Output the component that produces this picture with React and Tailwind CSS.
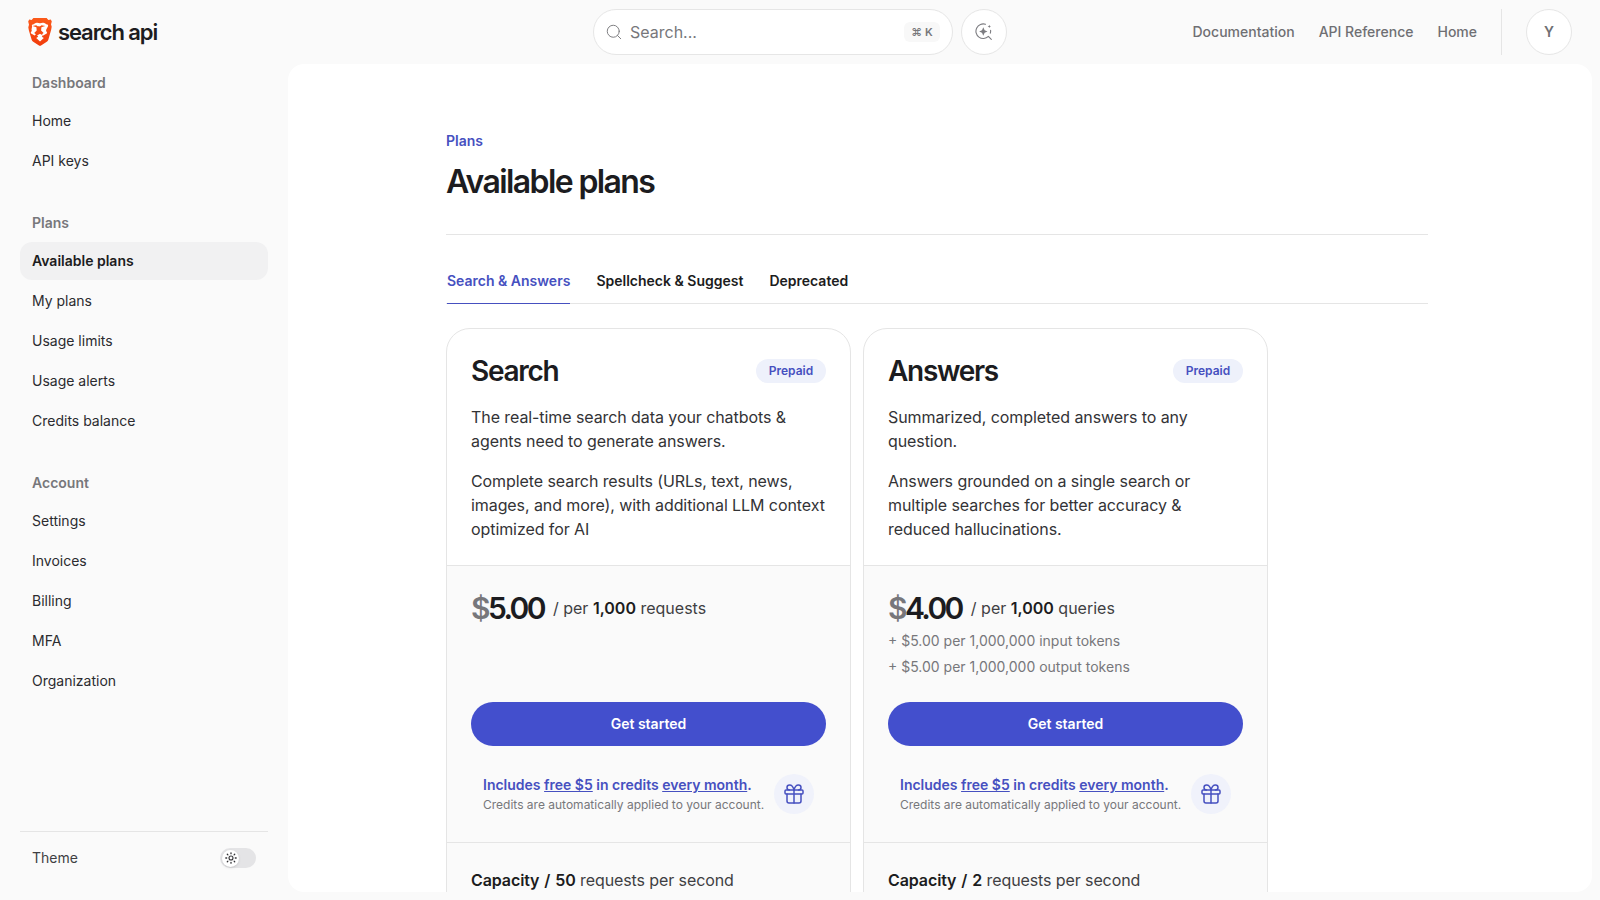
import { Search, Gift } from "lucide-react";

const NAV = [
  { title: "Dashboard", items: ["Home", "API keys"] },
  { title: "Plans", items: ["Available plans", "My plans", "Usage limits", "Usage alerts", "Credits balance"] },
  { title: "Account", items: ["Settings", "Invoices", "Billing", "MFA", "Organization"] },
];

const PLANS = [
  {
    name: "Search",
    lead: "The real-time search data your chatbots & agents need to generate answers.",
    body: "Complete search results (URLs, text, news, images, and more), with additional LLM context optimized for AI",
    price: "5.00",
    unit: "requests",
    extras: [],
    capacity: "50",
    capacityUnit: "requests",
  },
  {
    name: "Answers",
    lead: "Summarized, completed answers to any question.",
    body: "Answers grounded on a single search or multiple searches for better accuracy & reduced hallucinations.",
    price: "4.00",
    unit: "queries",
    extras: ["+ $5.00 per 1,000,000 input tokens", "+ $5.00 per 1,000,000 output tokens"],
    capacity: "2",
    capacityUnit: "requests",
  },
];

function LionLogo() {
  return (
    <svg width="24" height="28" viewBox="0 0 24 28" fill="none">
      <defs>
        <linearGradient id="lion" x1="0" y1="0" x2="0" y2="1">
          <stop offset="0" stopColor="#fb5a1a" />
          <stop offset="1" stopColor="#f13c0c" />
        </linearGradient>
      </defs>
      <path
        d="M5.400 0h13.200l1.800 2 2.400-.4 1 1.800-.8 2.900.7 2.500-.6 3.100-2.700 9.600c-.3 1.100-1 1.800-2 2.500l-5 3.300c-.9.700-1.900.7-2.800 0l-5-3.300c-1-.7-1.700-1.400-2-2.500L.9 12.400.3 9.300 1 6.800.2 3.400l1-1.800 2.400.4z"
        fill="url(#lion)"
      />
      <path
        d="M4.700 6.600c1.300-.6 2.700-1.600 4-1.900 1.200-.2 2.200.5 3.300.5s2.100-.7 3.300-.5c1.300.3 2.700 1.300 4 1.900.9.400 1 1.100.6 1.900l-1.600 2.900c-.4.8-.3 1.400.1 2.100l.6 1.100c.2.400.1.800-.3 1l-3.500 1.900-1.300-1.300 1.700-1.200-2.500-2.400.3-3.300 3.900-1.400-3.700-.6-1.900 1.200-.8-.4-.8.4-1.900-1.200-3.700.6 3.900 1.400.3 3.300-2.500 2.400 1.700 1.200-1.300 1.300-3.500-1.900c-.4-.2-.5-.6-.3-1l.6-1.100c.4-.7.5-1.300.1-2.100L4.100 8.500c-.4-.8-.3-1.500.6-1.900z"
        fill="#ffffff"
      />
      <path d="M12 15.800l2.900 1.800-1.100 1.200 2 1.200L12 23.600 8.200 20l2-1.200-1.100-1.200z" fill="#ffffff" />
    </svg>
  );
}

function AskIcon() {
  return (
    <svg width="18" height="18" viewBox="0 0 18 18" fill="none" className="text-[#7c7c80]">
      <path
        d="M10.500 1.300A7.300 7.300 0 1 0 13.400 13.400M13.400 13.400l2.900 2.900M15.600 7.200a7 7 0 0 1-.3 3"
        stroke="currentColor"
        strokeWidth="1.100"
        strokeLinecap="round"
      />
      <path d="M8.300 4.300l1.300 2.900 2.900 1.300-2.900 1.300-1.300 2.900-1.300-2.900-2.900-1.300 2.900-1.300z" fill="currentColor" />
      <path d="M14.300 1.700l.5 1.200 1.200.5-1.200.5-.5 1.200-.5-1.200-1.200-.5 1.200-.5z" fill="currentColor" />
    </svg>
  );
}

function SunDots() {
  return (
    <svg width="12" height="12" viewBox="0 0 12 12" fill="none" stroke="#333336" strokeLinecap="round">
      <circle cx="6" cy="6" r="2" strokeWidth="1.100" />
      <path
        d="M6 .8v.9M6 10.300v.9M.8 6h.9M10.300 6h.9M2.300 2.300l.6.6M9.100 9.100l.6.6M2.300 9.700l.6-.6M9.100 2.900l.6-.6"
        strokeWidth="1.300"
      />
    </svg>
  );
}

function Header() {
  return (
    <header className="flex h-16 shrink-0 items-center">
      <div className="flex w-[288px] shrink-0 items-center pl-[28px]">
        <LionLogo />
        <span className="ml-[6px] text-[22px] leading-none font-semibold tracking-[-1.100px] text-[#1c1c20]">
          search api
        </span>
      </div>
      <div className="ml-[305px] flex h-[46px] w-[360px] items-center rounded-full border border-[#e6e6e6] bg-white pr-[12px] pl-[11px]">
        <Search size={18} strokeWidth={1.300} className="text-[#7c7c80]" />
        <span className="ml-[7px] flex-1 text-base text-[#77777b]">Search...</span>
        <span className="flex h-[20px] w-[36px] items-center justify-center rounded-md bg-[#f8f8f8] text-[11px] font-semibold text-[#77777b]">
          ⌘ K
        </span>
      </div>
      <button className="ml-[8px] flex h-[46px] w-[46px] items-center justify-center rounded-full border border-[#e6e6e6] bg-white">
        <AskIcon />
      </button>
      <nav className="ml-auto flex items-center gap-6 text-sm font-medium text-[#6f6f73]">
        <span>Documentation</span>
        <span>API Reference</span>
        <span>Home</span>
      </nav>
      <div className="mr-[24px] ml-[24px] h-[46px] w-px bg-[#e5e5e5]" />
      <div className="mr-[28px] flex h-[46px] w-[46px] items-center justify-center rounded-full border border-[#e6e6e6] bg-white text-sm font-semibold text-[#6f6f73]">
        Y
      </div>
    </header>
  );
}

function Sidebar() {
  return (
    <aside className="flex w-[288px] shrink-0 flex-col justify-between pt-[9px]">
      <div className="flex flex-col gap-[33px] pr-[20px] pl-[20px]">
        {NAV.map((group) => (
          <div key={group.title} className="flex flex-col">
            <div className="mb-[9px] px-3 text-sm leading-5 font-semibold text-[#77777b]">{group.title}</div>
            <ul className="flex flex-col gap-[2px]">
              {group.items.map((item) => (
                <li
                  key={item}
                  className={
                    item === "Available plans"
                      ? "flex h-[38px] items-center rounded-xl bg-[#f1f1f2] px-3 text-sm font-semibold text-[#1c1c20]"
                      : "flex h-[38px] items-center px-3 text-sm text-[#2b2b2f]"
                  }
                >
                  {item}
                </li>
              ))}
            </ul>
          </div>
        ))}
      </div>
      <div className="mx-[20px] flex h-[69px] items-start justify-between border-t border-[#e5e5e5] pt-[16px] pr-[12px] pl-3">
        <span className="text-sm leading-5 text-[#3f3f43]">Theme</span>
        <div className="flex h-[20px] w-[36px] items-center rounded-full bg-[#e4e4e6] pl-[2px]">
          <div className="flex h-[17px] w-[17px] items-center justify-center rounded-full bg-white shadow-sm">
            <SunDots />
          </div>
        </div>
      </div>
    </aside>
  );
}

function PlanCard({ plan }) {
  return (
    <div className="w-[405px] overflow-hidden rounded-t-3xl border border-[#e5e5e5] bg-white">
      <div className="px-6 pt-6 pb-6">
        <div className="flex items-center justify-between">
          <h2 className="text-[28px] leading-9 font-semibold tracking-[-1.300px] text-[#1c1c20]">{plan.name}</h2>
          <span className="flex h-6 w-[70px] items-center justify-center rounded-full bg-[#eef1fb] text-xs font-semibold text-[#4650c0]">
            Prepaid
          </span>
        </div>
        <p className="mt-4 text-base leading-6 tracking-[-0.08px] text-[#333336]">{plan.lead}</p>
        <p className="mt-4 text-base leading-6 tracking-[-0.08px] text-[#333336]">{plan.body}</p>
      </div>
      <div className="border-t border-[#e5e5e5] bg-[#fafafa] px-6 pt-[22px]">
        <div className="h-[114px]">
          <div className="flex items-center text-base leading-10 text-[#3f3f43]">
            <span className="text-[30px] leading-10 font-semibold tracking-[-2.600px] text-[#1c1c20]">
              <span className="text-[#77777b]">$</span>
              {plan.price}
            </span>
            <span className="ml-[9px] whitespace-pre">
              / per <b className="font-semibold text-[#1c1c20]">1,000</b> {plan.unit}
            </span>
          </div>
          {plan.extras.map((line) => (
            <div key={line} className="text-sm leading-[26px] text-[#77777b]">
              {line}
            </div>
          ))}
        </div>
        <button className="h-[44px] w-full rounded-full bg-[#434fcd] text-sm font-semibold text-white">
          Get started
        </button>
        <div className="mt-[28px] flex items-center justify-between px-3 pb-[28px]">
          <div className="-mb-px pt-px">
            <div className="text-sm leading-5 font-semibold text-[#4650c0]">
              Includes <span className="underline">free $5</span> in credits{" "}
              <span className="underline">every month</span>.
            </div>
            <div className="text-xs leading-5 text-[#77777b]">Credits are automatically applied to your account.</div>
          </div>
          <div className="flex h-10 w-10 items-center justify-center rounded-full bg-[#f0f2fb]">
            <Gift size={24} strokeWidth={1.500} className="text-[#4650c0]" />
          </div>
        </div>
      </div>
      <div className="border-t border-[#e5e5e5] bg-[#fafafa] px-6 pt-[25px] pb-6 text-base leading-6 tracking-[-0.1px] text-[#3f3f43]">
        <b className="font-semibold text-[#1c1c20]">
          Capacity <span className="mx-[1px]">/</span> {plan.capacity}
        </b>{" "}
        {plan.capacityUnit} per second
      </div>
    </div>
  );
}

export default function App() {
  return (
    <div className="flex h-[900px] w-[1600px] flex-col overflow-hidden bg-[#fafafa] font-['Inter',sans-serif]">
      <Header />
      <div className="flex min-h-0 flex-1">
        <Sidebar />
        <main className="mr-2 mb-2 flex-1 overflow-hidden rounded-2xl bg-white pt-[67px] pr-[164px] pl-[158px]">
          <div className="text-sm leading-5 font-semibold text-[#4650c0]">Plans</div>
          <h1 className="mt-[11px] text-[32px] leading-10 font-semibold tracking-[-1.600px] text-[#1c1c20]">
            Available plans
          </h1>
          <div className="mt-8 h-px bg-[#e5e5e5]" />
          <div className="mt-[36px] flex gap-[26px] border-b border-[#e5e5e5] pl-px text-sm font-semibold text-[#1c1c20]">
            <span className="-mb-px h-[33px] border-b border-[#4650c0] text-[#4650c0]">Search & Answers</span>
            <span>Spellcheck & Suggest</span>
            <span>Deprecated</span>
          </div>
          <div className="mt-6 flex gap-[12px]">
            {PLANS.map((plan) => (
              <PlanCard key={plan.name} plan={plan} />
            ))}
          </div>
        </main>
      </div>
    </div>
  );
}
